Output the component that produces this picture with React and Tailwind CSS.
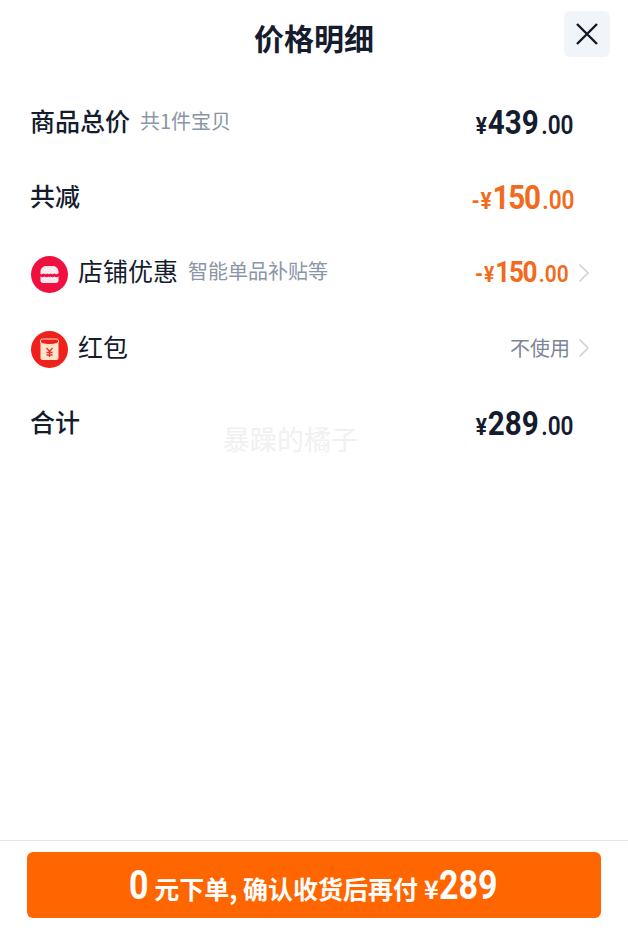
const cjk = '[font-family:"Noto_Sans_CJK_SC",sans-serif]';
const num = "font-['Roboto','Noto_Sans_CJK_SC',sans-serif]";

function Price({ yuan, minus, color, small }) {
  return (
    <div className={`flex origin-right scale-x-[0.87] items-baseline pb-[2px] ${num} font-bold ${color}`}>
      {minus && <span className="mr-[1px] text-[24px] leading-none">-</span>}
      <span className={`${small ? 'text-[22px]' : 'text-[24px]'} leading-none`}>¥</span>
      <span className={`ml-[1px] ${minus ? 'tracking-[-1.5px]' : ''} ${small ? 'text-[30px]' : 'text-[34px]'} leading-none`}>{yuan}</span>
      <span className={`ml-[3px] font-semibold ${small ? 'text-[24px]' : 'text-[26px]'} leading-none`}>.00</span>
    </div>
  );
}

function Chevron() {
  return (
    <svg viewBox="0 0 12 20" className="ml-[9px] h-[20px] w-[12px] shrink-0" fill="none">
      <path d="M1.500 1.500L10 10L1.500 18.500" stroke="#cfd3d9" strokeWidth="1.700" />
    </svg>
  );
}

function ShopIcon() {
  return (
    <svg viewBox="0 0 37 37" className="mt-[2px] h-[37px] w-[37px] shrink-0">
      <circle cx="18.5" cy="18.5" r="18.5" fill="#f0103f" />
      <path d="M9.500 17.500v-2c0-3 2.500-5.500 5.500-5.500h7c3 0 5.500 2.500 5.500 5.500v2c-1.500 1-3 1-4.200 0-1.300 1-2.600 1-3.800 0-.7 1-2.300 1-3 0-1.200 1-2.500 1-3.800 0-1.200 1-2.700 1-4.200 0z" fill="#fdeaf0" />
      <path d="M9.500 20.500c1.500 1 3 1 4.200 0 1.300 1 2.600 1 3.800 0 .7 1 1.300 1 2 0 1.200 1 2.500 1 3.800 0 1.200 1 2.700 1 4.200 0v4c0 1.500-1 2.500-2.500 2.500H12c-1.500 0-2.500-1-2.500-2.500z" fill="#fdeaf0" />
    </svg>
  );
}

function RedPacketIcon() {
  return (
    <svg viewBox="0 0 37 37" className="mt-[2px] h-[37px] w-[37px] shrink-0">
      <circle cx="18.5" cy="18.5" r="18.5" fill="#f0201c" />
      <rect x="9.500" y="8" width="18" height="21" rx="2" fill="#fde3c8" />
      <path d="M9.500 10c0-1.100.9-2 2-2h14c1.100 0 2 .9 2 2v1.500c-2.500 1.500-5.500 2-9 2s-6.500-.5-9-2z" fill="#f0201c" stroke="#fde3c8" strokeWidth="1" />
      <path d="M15.500 17l3 3.500 3-3.500M18.500 20.500v5.500M15.500 21.500h6M15.500 24h6" fill="none" stroke="#e5312a" strokeWidth="1.300" />
    </svg>
  );
}

export default function App() {
  return (
    <div className={`relative flex h-[944px] w-[628px] flex-col overflow-hidden bg-white text-[#141c2e] ${cjk}`}>
      <div className="relative flex h-[85px] items-start justify-center pt-[15px]">
        <h1 className="text-[30px] leading-[44px] font-bold">价格明细</h1>
        <button className="absolute top-[11px] right-[18px] flex h-[46px] w-[46px] items-center justify-center rounded-md bg-[#f1f5f9]">
          <svg viewBox="0 0 24 24" className="h-[24px] w-[24px]" fill="none">
            <path d="M2 2L22 22M22 2L2 22" stroke="#111827" strokeWidth="2.400" />
          </svg>
        </button>
      </div>

      <div className="flex flex-col pr-[54px] pl-[31px]">
        <div className="flex h-[75.25px] items-center justify-between">
          <div className="-ml-[1px] flex items-center gap-[10px] pb-[4px]">
            <span className="text-[25px] font-medium">商品总价</span>
            <span className="text-[20px] text-[#8b95a7]">共1件宝贝</span>
          </div>
          <Price yuan="439" color="text-[#141c2e]" />
        </div>

        <div className="flex h-[75.25px] items-center justify-between">
          <span className="-ml-[1px] pb-[4px] text-[25px] font-medium">共减</span>
          <Price yuan="150" minus color="text-[#f26a1b]" />
        </div>

        <div className="-mr-[16px] flex h-[75.25px] items-center justify-between">
          <div className="flex items-center">
            <ShopIcon />
            <span className="ml-[10px] pb-[4px] text-[25px]">店铺优惠</span>
            <span className="ml-[10px] pb-[4px] text-[20px] text-[#8b95a7]">智能单品补贴等</span>
          </div>
          <div className="flex items-center">
            <Price yuan="150" minus small color="text-[#f26a1b]" />
            <Chevron />
          </div>
        </div>

        <div className="-mr-[16px] flex h-[75.25px] items-center justify-between">
          <div className="flex items-center">
            <RedPacketIcon />
            <span className="ml-[10px] pb-[4px] text-[25px]">红包</span>
          </div>
          <div className="flex items-center">
            <span className="translate-x-[1px] pb-[1px] text-[20px] text-[#7c8698]">不使用</span>
            <Chevron />
          </div>
        </div>

        <div className="flex h-[75.25px] items-center justify-between">
          <span className="-ml-[1px] pb-[4px] text-[25px] font-medium">合计</span>
          <Price yuan="289" color="text-[#141c2e]" />
        </div>
      </div>

      <span className="absolute top-[420px] left-[223px] text-[27px] leading-[38px] text-[#f0f0f0]">暴躁的橘子</span>

      <div className="mt-auto h-[104px] border-t border-[#e5e5e5] px-[27px] pt-[11px]">
        <button className="flex h-[66px] w-full items-baseline justify-center rounded-md bg-[#ff6600] pt-[14px] font-bold text-white">
          <span className="inline-block w-[19px] origin-left scale-x-[0.85] font-['Roboto'] text-[40px] leading-none">0</span>
          <span className="ml-[6px] text-[25px] leading-none">元下单, 确认收货后再付</span>
          <span className="ml-[6px] text-[25px] leading-none">¥</span>
          <span className="inline-block w-[60px] origin-left scale-x-[0.85] font-['Roboto'] text-[40px] leading-none">289</span>
        </button>
      </div>
    </div>
  );
}
